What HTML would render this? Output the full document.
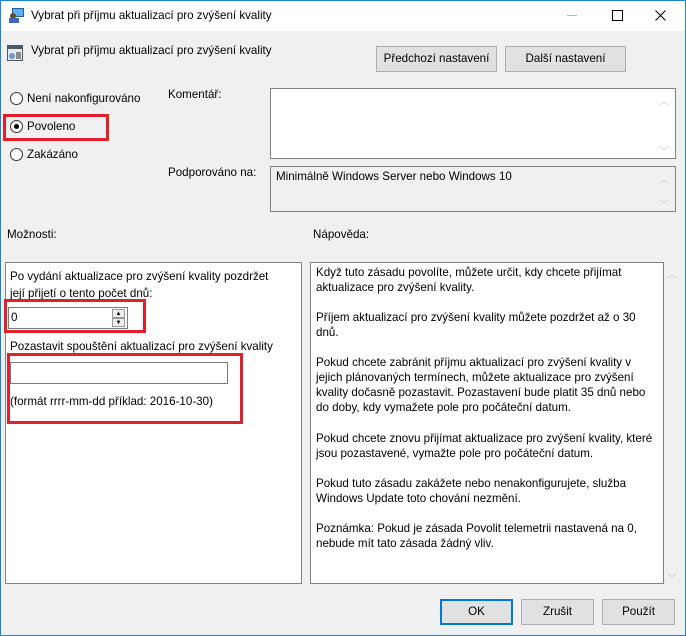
<!DOCTYPE html>
<html><head><meta charset="utf-8"><style>
*{margin:0;padding:0;box-sizing:border-box}
body{width:686px;height:636px;background:#f0f0f0;font-family:"Liberation Sans",sans-serif;font-size:11.6px;color:#000;position:relative;overflow:hidden}
.a{position:absolute;white-space:nowrap}
.win{position:absolute;left:0;top:0;width:686px;height:636px;border:1px solid #1883d7}
.btn{position:absolute;background:#e1e1e1;border:1px solid #adadad;text-align:center;line-height:24px}
.box{position:absolute;background:#fff;border:1px solid #828282}
.radio{position:absolute;width:13px;height:13px;border:1px solid #333;border-radius:50%;background:#fff}
.red{position:absolute;border:3px solid #e0202a}
.sc{position:absolute;color:#c8c8c8;font-size:10px}
</style></head><body>
<div class="a" style="left:0;top:0;width:686px;height:31px;background:#fff"></div>
<svg class="a" style="left:8px;top:7px" width="18" height="16"><rect x="4" y="1" width="12" height="9" fill="#1e5fa8"/><rect x="5" y="2" width="10" height="7" fill="#5fb0ea"/><circle cx="5" cy="9" r="3" fill="#6a4a2a"/><rect x="1" y="11" width="10" height="5" fill="#3a6ab0"/></svg>
<div class="a" style="left:31px;top:9px">Vybrat při příjmu aktualizací pro zvýšení kvality</div>
<div class="a" style="left:567px;top:15px;width:10px;height:1px;background:#bbb"></div>
<div class="a" style="left:612px;top:10px;width:11px;height:11px;border:1px solid #000"></div>
<svg class="a" style="left:655px;top:10px" width="11" height="11"><path d="M0.5 0.5L10.5 10.5M10.5 0.5L0.5 10.5" stroke="#000" stroke-width="1"/></svg>
<svg class="a" style="left:7px;top:45px" width="16" height="16"><rect x="0" y="0" width="16" height="16" fill="#4a5a6a"/><rect x="1" y="4" width="14" height="11" fill="#e8e8e8"/><circle cx="5" cy="11" r="3" fill="#6a9ad0"/><rect x="9" y="7" width="5" height="7" fill="#8a8a8a"/></svg>
<div class="a" style="left:31px;top:44px">Vybrat při příjmu aktualizací pro zvýšení kvality</div>
<div class="btn" style="left:376px;top:46px;width:121px;height:26px">Předchozí nastavení</div>
<div class="btn" style="left:505px;top:46px;width:121px;height:26px">Další nastavení</div>
<div class="radio" style="left:10px;top:92px"></div>
<div class="a" style="left:27px;top:92px">Není nakonfigurováno</div>
<div class="radio" style="left:10px;top:120px"></div>
<div class="a" style="left:14px;top:124px;width:5px;height:5px;border-radius:50%;background:#000"></div>
<div class="a" style="left:27px;top:120px">Povoleno</div>
<div class="red" style="left:3px;top:114px;width:106px;height:27px"></div>
<div class="radio" style="left:10px;top:148px"></div>
<div class="a" style="left:27px;top:148px">Zakázáno</div>
<div class="a" style="left:168px;top:88px">Komentář:</div>
<div class="box" style="left:270px;top:88px;width:406px;height:71px"></div>
<div class="sc" style="left:659px;top:93px">︿</div><div class="sc" style="left:659px;top:143px">﹀</div>
<div class="a" style="left:168px;top:166px">Podporováno na:</div>
<div class="box" style="left:270px;top:166px;width:406px;height:46px;background:#f0f0f0"></div>
<div class="a" style="left:276px;top:170px">Minimálně Windows Server nebo Windows 10</div>
<div class="sc" style="left:659px;top:171px">︿</div><div class="sc" style="left:659px;top:196px">﹀</div>
<div class="a" style="left:7px;top:228px">Možnosti:</div>
<div class="a" style="left:313px;top:228px">Nápověda:</div>
<div class="box" style="left:5px;top:262px;width:297px;height:322px"></div>
<div class="a" style="left:10px;top:268px;line-height:17px">Po vydání aktualizace pro zvýšení kvality pozdržet<br>její přijetí o tento počet dnů:</div>
<div class="a" style="left:8px;top:307px;width:120px;height:22px;border:1px solid #7a7a7a;background:#fff;padding:2px 2px;line-height:16px">0</div>
<div class="a" style="left:112px;top:309px;width:13px;height:9px;border:1px solid #999;background:#eee;font-size:6px;text-align:center;line-height:8px">▲</div>
<div class="a" style="left:112px;top:318px;width:13px;height:9px;border:1px solid #999;background:#eee;font-size:6px;text-align:center;line-height:8px">▼</div>
<div class="red" style="left:4px;top:299px;width:142px;height:34px"></div>
<div class="a" style="left:10px;top:340px">Pozastavit spouštění aktualizací pro zvýšení kvality</div>
<div class="a" style="left:10px;top:362px;width:218px;height:22px;border:1px solid #7a7a7a;background:#fff"></div>
<div class="a" style="left:10px;top:395px">(formát rrrr-mm-dd příklad: 2016-10-30)</div>
<div class="red" style="left:7px;top:353px;width:236px;height:71px"></div>
<div class="box" style="left:310px;top:262px;width:354px;height:322px"></div>
<div class="a" style="left:316px;top:265px;line-height:15.05px">Když tuto zásadu povolíte, můžete určit, kdy chcete přijímat<br>aktualizace pro zvýšení kvality.<br><br>Příjem aktualizací pro zvýšení kvality můžete pozdržet až o 30<br>dnů.<br><br>Pokud chcete zabránit příjmu aktualizací pro zvýšení kvality v<br>jejich plánovaných termínech, můžete aktualizace pro zvýšení<br>kvality dočasně pozastavit. Pozastavení bude platit 35 dnů nebo<br>do doby, kdy vymažete pole pro počáteční datum.<br><br>Pokud chcete znovu přijímat aktualizace pro zvýšení kvality, které<br>jsou pozastavené, vymažte pole pro počáteční datum.<br><br>Pokud tuto zásadu zakážete nebo nenakonfigurujete, služba<br>Windows Update toto chování nezmění.<br><br>Poznámka: Pokud je zásada Povolit telemetrii nastavená na 0,<br>nebude mít tato zásada žádný vliv.</div>
<div class="sc" style="left:667px;top:266px">︿</div><div class="sc" style="left:667px;top:570px">﹀</div>
<div class="btn" style="left:440px;top:599px;width:73px;height:26px;border:2px solid #0078d7;line-height:22px">OK</div>
<div class="btn" style="left:521px;top:599px;width:73px;height:26px">Zrušit</div>
<div class="btn" style="left:602px;top:599px;width:73px;height:26px">Použít</div>
<div class="win"></div>
</body></html>
